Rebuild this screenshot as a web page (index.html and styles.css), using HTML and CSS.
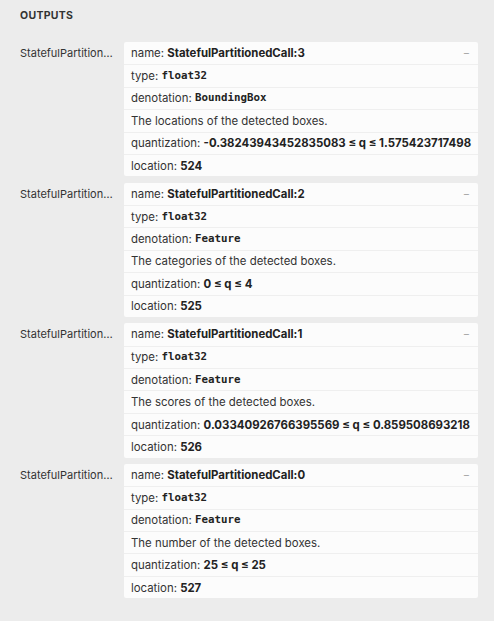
FILE: index.html
```html
<!DOCTYPE html>
<html>
<head>
<meta charset="utf-8">
<link rel="stylesheet" href="styles.css">
</head>
<body>
<div class="sidebar">
  <div class="header">Outputs</div>

  <div class="item">
    <div class="item-name">StatefulPartitionedCall:3</div>
    <div class="card">
      <div class="line"><span class="text">name: <b>StatefulPartitionedCall:3</b></span><span class="expander">−</span></div>
      <div class="line">type: <code>float32</code></div>
      <div class="line">denotation: <code>BoundingBox</code></div>
      <div class="line">The locations of the detected boxes.</div>
      <div class="line">quantization: <b>-0.38243943452835083 ≤ q ≤ 1.575423717498</b></div>
      <div class="line">location: <b>524</b></div>
    </div>
  </div>

  <div class="item">
    <div class="item-name">StatefulPartitionedCall:2</div>
    <div class="card">
      <div class="line"><span class="text">name: <b>StatefulPartitionedCall:2</b></span><span class="expander">−</span></div>
      <div class="line">type: <code>float32</code></div>
      <div class="line">denotation: <code>Feature</code></div>
      <div class="line">The categories of the detected boxes.</div>
      <div class="line">quantization: <b>0 ≤ q ≤ 4</b></div>
      <div class="line">location: <b>525</b></div>
    </div>
  </div>

  <div class="item">
    <div class="item-name">StatefulPartitionedCall:1</div>
    <div class="card">
      <div class="line"><span class="text">name: <b>StatefulPartitionedCall:1</b></span><span class="expander">−</span></div>
      <div class="line">type: <code>float32</code></div>
      <div class="line">denotation: <code>Feature</code></div>
      <div class="line">The scores of the detected boxes.</div>
      <div class="line">quantization: <b>0.03340926766395569 ≤ q ≤ 0.859508693218</b></div>
      <div class="line">location: <b>526</b></div>
    </div>
  </div>

  <div class="item">
    <div class="item-name">StatefulPartitionedCall:0</div>
    <div class="card">
      <div class="line"><span class="text">name: <b>StatefulPartitionedCall:0</b></span><span class="expander">−</span></div>
      <div class="line">type: <code>float32</code></div>
      <div class="line">denotation: <code>Feature</code></div>
      <div class="line">The number of the detected boxes.</div>
      <div class="line">quantization: <b>25 ≤ q ≤ 25</b></div>
      <div class="line">location: <b>527</b></div>
    </div>
  </div>
</div>
</body>
</html>
```

FILE: styles.css
```css
html, body {
  margin: 0;
  padding: 0;
  background: #ececec;
}
body {
  font-family: Inter, "Liberation Sans", sans-serif;
  color: #333;
  font-size: 11.4px;
}
.sidebar {
  padding: 9px 16px 0 20px;
  display: flex;
  flex-direction: column;
  gap: 6.3px;
}
.header {
  font-weight: bold;
  font-size: 10.5px;
  text-transform: uppercase;
  letter-spacing: 0.3px;
  line-height: 13px;
  color: #333;
  margin-bottom: 13.7px;
}
.item {
  display: flex;
  align-items: flex-start;
}
.item-name {
  width: 96px;
  flex: none;
  margin-right: 8px;
  height: 22.4px;
  box-sizing: border-box;
  padding-top: 4px;
  font-size: 11px;
  line-height: 14.4px;
  white-space: nowrap;
  overflow: hidden;
  text-overflow: ellipsis;
  color: #333;
}
.card {
  flex: 1;
  background: #fcfcfc;
  border-radius: 2px;
  overflow: hidden;
}
.line {
  display: flex;
  align-items: center;
  height: 22.4px;
  box-sizing: border-box;
  padding: 0 7px;
  line-height: 14px;
  white-space: pre;
  border-top: 1px solid #efefef;
}
.line:first-child {
  border-top: none;
}
.text {
  flex: 1;
  white-space: pre;
}
.line b {
  font-weight: bold;
  color: #222;
}
.line code {
  font-family: "DejaVu Sans Mono", "Liberation Mono", monospace;
  font-weight: bold;
  font-size: 10.8px;
  line-height: 14px;
  color: #222;
}
.expander {
  color: #aaa;
  font-size: 11px;
  margin-right: 1px;
}
```
